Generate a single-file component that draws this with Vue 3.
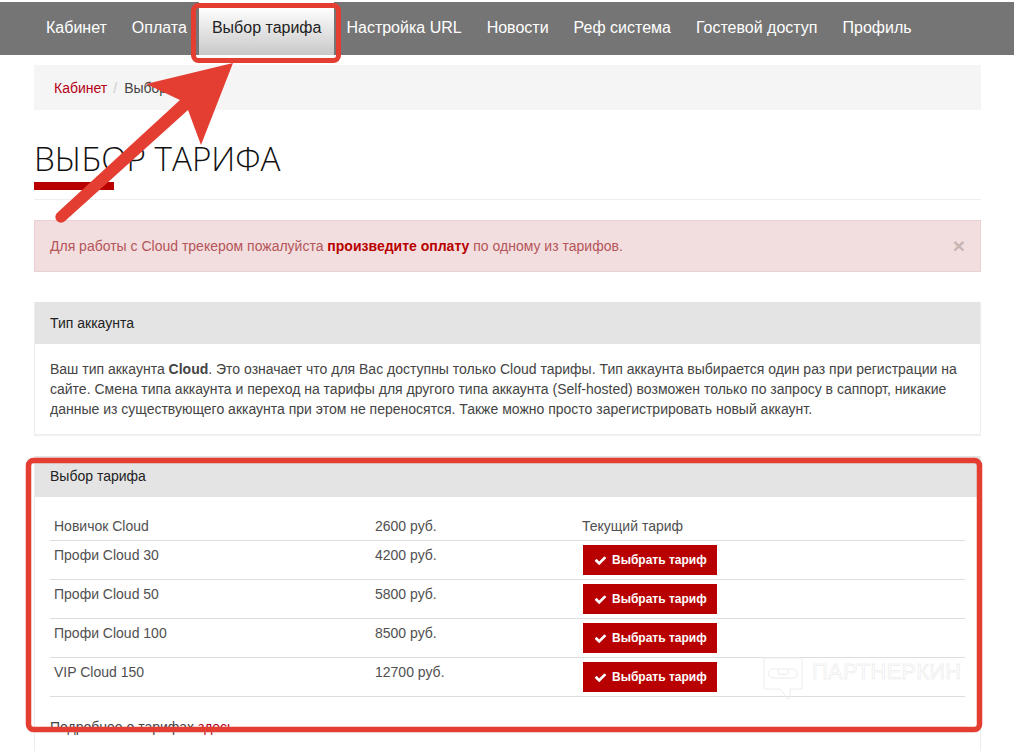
<script setup>
const navItems = [
  { label: 'Кабинет' },
  { label: 'Оплата' },
  { label: 'Выбор тарифа', active: true },
  { label: 'Настройка URL' },
  { label: 'Новости' },
  { label: 'Реф система' },
  { label: 'Гостевой доступ' },
  { label: 'Профиль' }
]
const tariffs = [
  { name: 'Профи Cloud 30', price: '4200 руб.' },
  { name: 'Профи Cloud 50', price: '5800 руб.' },
  { name: 'Профи Cloud 100', price: '8500 руб.' },
  { name: 'VIP Cloud 150', price: '12700 руб.' }
]
</script>

<template>
  <div class="page">
    <nav class="topnav">
      <a v-for="item in navItems" :key="item.label" class="navlink" :class="{ active: item.active }">{{ item.label }}</a>
    </nav>

    <main class="content">
      <div class="crumbs">
        <a class="crumb-link">Кабинет</a>
        <span class="crumb-sep">/</span>
        <span class="crumb-current">Выбор тарифа</span>
      </div>

      <div class="title-block">
        <h1 class="title">Выбор тарифа</h1>
        <div class="title-bar"></div>
      </div>

      <div class="alert">
        <span>Для работы с Cloud трекером пожалуйста <b class="alert-strong">произведите оплату</b> по одному из тарифов.</span>
        <span class="alert-close">×</span>
      </div>

      <section class="panel first">
        <div class="panel-head">Тип аккаунта</div>
        <div class="panel-body">
          Ваш тип аккаунта <b>Cloud</b>. Это означает что для Вас доступны только Cloud тарифы. Тип аккаунта выбирается один раз при регистрации на сайте. Смена типа аккаунта и переход на тарифы для другого типа аккаунта (Self-hosted) возможен только по запросу в саппорт, никакие данные из существующего аккаунта при этом не переносятся. Также можно просто зарегистрировать новый аккаунт.
        </div>
      </section>

      <section class="panel">
        <div class="panel-head">Выбор тарифа</div>
        <div class="panel-body">
          <div class="row">
            <div class="cell c1">Новичок Cloud</div>
            <div class="cell c2">2600 руб.</div>
            <div class="cell c3">Текущий тариф</div>
          </div>
          <div v-for="t in tariffs" :key="t.name" class="row">
            <div class="cell c1">{{ t.name }}</div>
            <div class="cell c2">{{ t.price }}</div>
            <div class="cell c3">
              <button class="choose">
                <svg class="check" viewBox="0 0 1792 1792" width="13" height="13"><path fill="#fff" d="M1671 566q0 40-28 68l-724 724-136 136q-28 28-68 28t-68-28l-136-136-362-362q-28-28-28-68t28-68l136-136q28-28 68-28t68 28l294 295 656-657q28-28 68-28t68 28l136 136q28 28 28 68z"/></svg>
                Выбрать тариф
              </button>
            </div>
          </div>
          <p class="more">Подробнее о тарифах <a class="crumb-link">здесь</a></p>
        </div>
      </section>
    </main>

    <div class="watermark">
      <svg width="40" height="44" viewBox="0 0 40 44" fill="none" stroke="#ececec" stroke-width="1">
        <path d="M1 1 H39 V32 H27 V41 L25 42 L17 32 H1 Z"/>
        <rect x="5.5" y="12" width="29" height="9" rx="4.5"/>
        <path d="M15 12 V15.5 a2 2 0 0 0 2 2 h6 a2 2 0 0 0 2 -2 V12"/>
      </svg>
      <span class="wm-text">ПАРТНЕРКИН</span>
    </div>

    <svg class="annotation" width="1014" height="751" viewBox="0 0 1014 751">
      <rect x="193.5" y="5.5" width="145" height="55" rx="5" fill="none" stroke="#e43e32" stroke-width="5"/>
      <rect x="28.5" y="460.5" width="951" height="269" rx="5" fill="none" stroke="#e43e32" stroke-width="5.5"/>
      <path d="M57 213 L180 100 L146 84 L233 63 L201 145 L188 110 L65 221 A5.6 5.6 0 0 1 57 213 Z" fill="#e43e32"/>
    </svg>
  </div>
</template>

<style scoped>
.page {
  position: relative;
  width: 1014px;
  height: 751px;
  overflow: hidden;
  background: #fff;
  font-family: "Liberation Sans", Arial, sans-serif;
  font-size: 14px;
  line-height: 20px;
  color: #444;
}
.topnav {
  display: flex;
  height: 53px;
  margin-top: 2px;
  padding-left: 33.5px;
  background: #757575;
  box-sizing: border-box;
}
.navlink {
  padding: 16px 12.5px 0;
  font-size: 16px;
  line-height: 20px;
  color: #fff;
}
.navlink.active {
  color: #222;
  background: linear-gradient(#fff 10%, #c8c8c8);
}
.content {
  margin: 0 33px 0 34px;
}
.crumbs {
  display: flex;
  height: 45px;
  margin-top: 10px;
  padding: 0 20px;
  align-items: center;
  background: #f5f5f5;
  box-sizing: border-box;
}
.crumb-link {
  color: #b30016;
}
.crumb-sep {
  margin: 0 7px 0 6px;
  color: #ccc;
}
.crumb-current {
  color: #444;
}
.title-block {
  position: relative;
  height: 89px;
  border-bottom: 1px solid #eee;
}
.title {
  margin: 0;
  padding-top: 27px;
  font-family: "Open Sans", sans-serif;
  font-size: 33.2px;
  font-weight: 300;
  line-height: 44px;
  color: #111;
  text-transform: uppercase;
}
.title-bar {
  position: absolute;
  left: 0;
  bottom: 9px;
  width: 80px;
  height: 8px;
  background: #b80000;
}
.alert {
  display: flex;
  justify-content: space-between;
  align-items: center;
  height: 52px;
  margin-top: 20px;
  padding: 0 15px;
  box-sizing: border-box;
  background: #f2dede;
  border: 1px solid #ebd0d3;
  color: #b5555a;
}
.alert-strong {
  color: #b80000;
}
.alert-close {
  font-size: 21px;
  font-weight: 700;
  color: #c9b4b4;
}
.panel {
  margin-top: 21px;
  border: 1px solid #eee;
  border-top: 0;
  box-shadow: 0 1px 1px rgba(0, 0, 0, 0.05);
  background: #fff;
}
.panel.first {
  margin-top: 30px;
}
.panel-head {
  height: 41px;
  padding: 10px 15px;
  box-sizing: border-box;
  background: #e4e4e4;
  color: #222;
}
.panel.first .panel-head {
  height: 42px;
  padding-top: 11px;
}
.panel-body {
  padding: 15px;
}
.row {
  display: grid;
  grid-template-columns: 321px 207px 1fr;
  border-bottom: 1px solid #ddd;
}
.cell {
  padding: 4px;
  color: #505050;
}
.choose {
  display: flex;
  align-items: center;
  width: 134px;
  height: 30px;
  margin-left: 1px;
  padding: 0 0 0 11px;
  border: 0;
  background: #b80000;
  color: #fff;
  font-family: "Liberation Sans", Arial, sans-serif;
  font-size: 12px;
  font-weight: 700;
}
.check {
  margin-right: 5px;
}
.more {
  margin: 20px 0 0;
}
.watermark {
  position: absolute;
  left: 763px;
  top: 657px;
  display: flex;
  align-items: flex-start;
  gap: 9px;
}
.wm-text {
  margin-top: 3px;
  font-size: 22px;
  line-height: 24px;
  letter-spacing: 0.2px;
  color: #fff;
  -webkit-text-stroke: 0.5px #e6e6e6;
}
.annotation {
  position: absolute;
  left: 0;
  top: 0;
  pointer-events: none;
}
</style>
